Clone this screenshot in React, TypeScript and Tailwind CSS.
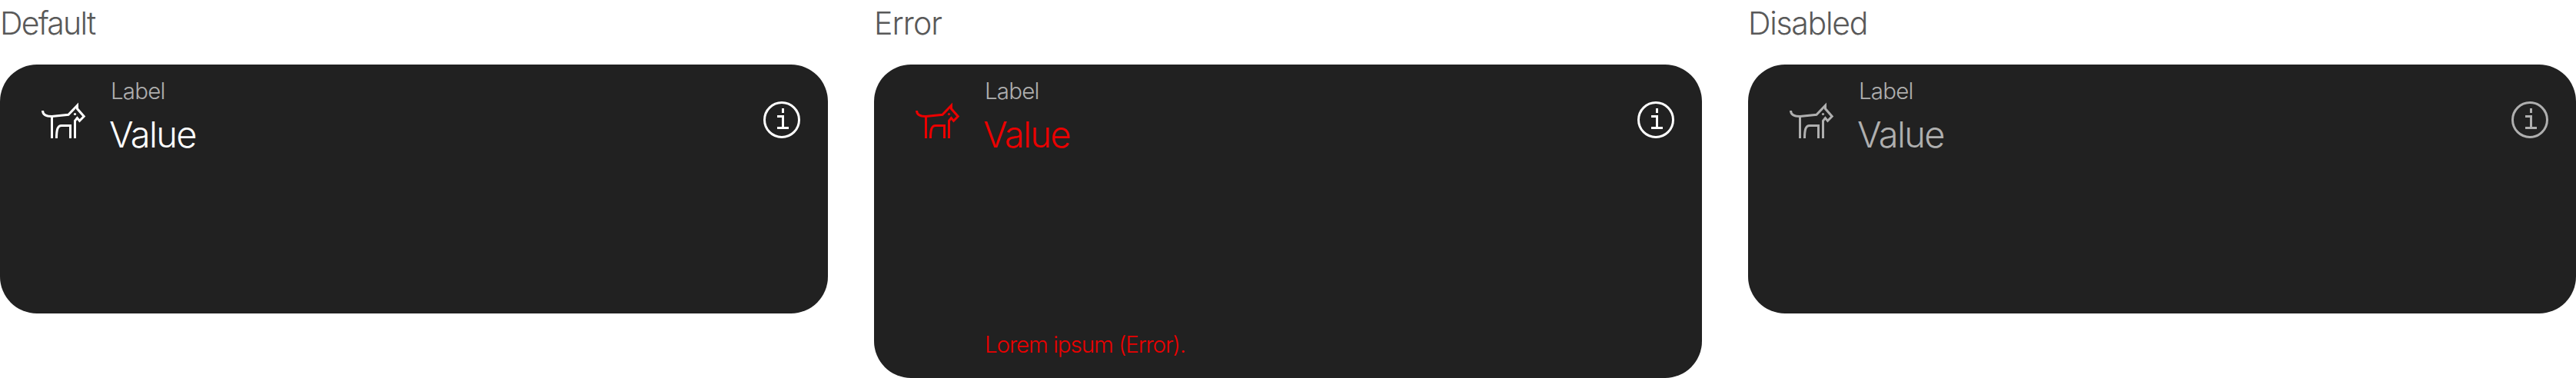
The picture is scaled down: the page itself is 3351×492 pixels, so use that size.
type FieldProps = {
  title: string;
  titleTracking: string;
  tone: string;
  infoTone: string;
  error?: string;
};

function DogIcon({ className }: { className: string }) {
  return (
    <svg width="72" height="72" viewBox="0 0 72 72" fill="none" stroke="currentColor" strokeWidth="3" className={className}>
      <path d="M7.5 24C7.6 28.8 11.5 31.5 19.5 31.5L41 29.2L52.5 17.2V21.6L61.2 31.5L55.5 37.3L52.4 33.6L49.5 37.2V60" />
      <path d="M19.5 31.5V60M25.5 60C25.5 49 26.8 43.5 32 43.5H43.5V60" />
      <circle cx="49.5" cy="28.5" r="1.6" fill="currentColor" stroke="none" />
    </svg>
  );
}

function InfoIcon({ className }: { className: string }) {
  return (
    <svg width="48" height="48" viewBox="0 0 48 48" fill="none" stroke="currentColor" strokeWidth="3" className={className}>
      <circle cx="24" cy="24" r="22.5" />
      <path d="M25.5 9V15M18 19.5H25.5V34.5M18 34.5H33" />
    </svg>
  );
}

function Field({ title, titleTracking, tone, infoTone, error }: FieldProps) {
  return (
    <section className="flex w-[1077px] flex-col">
      <h2 className={`h-[84px] pt-[5px] text-[41px] leading-[50px] text-[#595959] ${titleTracking}`}>{title}</h2>
      <div className={`flex flex-col justify-between rounded-[48px] bg-[#212121] ${error ? "h-[408px]" : "h-[324px]"}`}>
        <div className="flex items-start pl-12 pr-9">
          <DogIcon className={`mt-9 shrink-0 ${tone}`} />
          <div className="flex-1 pl-6">
            <p className="pt-[16px] text-[29.5px] leading-[36px] tracking-[-0.8px] text-[#afafaf]">{"Label"}</p>
            <p className={`-ml-0.5 pt-[9px] text-[47px] leading-[60px] tracking-[-1.6px] ${tone}`}>{"Value"}</p>
          </div>
          <InfoIcon className={`mt-12 shrink-0 ${infoTone}`} />
        </div>
        {error && (
          <p className="pb-[26px] pl-[144px] text-[29.5px] leading-[36px] tracking-[-1.06px] text-[#eb0000]">{error}</p>
        )}
      </div>
    </section>
  );
}

export default function App() {
  return (
    <main className="flex h-[492px] w-[3351px] items-start gap-[60px] bg-white font-['Inter','Liberation_Sans',sans-serif] font-light">
      <Field title="Default" titleTracking="tracking-[-1.8px]" tone="text-white" infoTone="text-white" />
      <Field
        title="Error"
        titleTracking="tracking-[-0.9px]"
        tone="text-[#eb0000]"
        infoTone="text-white"
        error="Lorem ipsum (Error)."
      />
      <Field title="Disabled" titleTracking="tracking-[-1.3px]" tone="text-[#afafaf]" infoTone="text-[#afafaf]" />
    </main>
  );
}
